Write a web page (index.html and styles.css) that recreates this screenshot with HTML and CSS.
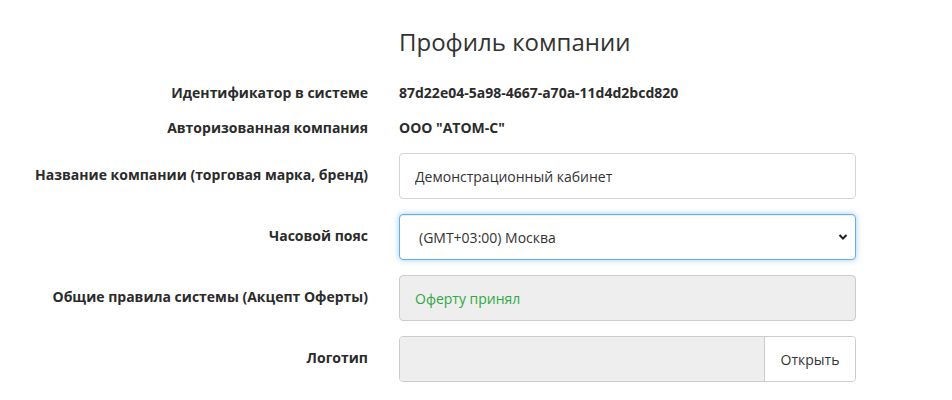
FILE: index.html
```html
<!DOCTYPE html>
<html lang="ru">
<head>
    <meta charset="UTF-8">
    <meta name="viewport" content="width=device-width, initial-scale=1.0">
    <title>Профиль компании</title>
    <link rel="stylesheet" href="styles.css">
</head>
<body>
    <div class="page">
        <div class="form-row title-row">
            <div></div>
            <h1>Профиль компании</h1>
        </div>

        <div class="info-row">
            <div class="label">Идентификатор в системе</div>
            <div class="value">87d22e04-5a98-4667-a70a-11d4d2bcd820</div>
        </div>
        <div class="info-row">
            <div class="label">Авторизованная компания</div>
            <div class="value">ООО "АТОМ-С"</div>
        </div>

        <form id="profileForm">
            <div class="form-row">
                <label for="brand">Название компании (торговая марка, бренд)</label>
                <input type="text" id="brand" class="field" value="Демонстрационный кабинет">
            </div>

            <div class="form-row">
                <label for="tz">Часовой пояс</label>
                <div class="select-wrap">
                    <select id="tz" class="field focused">
                        <option>(GMT+03:00) Москва</option>
                    </select>
                    <svg class="chevron" width="10" height="8" viewBox="0 0 10 8">
                        <path d="M1.5 2 L5 5.5 L8.5 2" fill="none" stroke="#222" stroke-width="2"/>
                    </svg>
                </div>
            </div>

            <div class="form-row">
                <label>Общие правила системы (Акцепт Оферты)</label>
                <div class="field readonly offer">Оферту принял</div>
            </div>

            <div class="form-row">
                <label for="logo">Логотип</label>
                <div class="file-group">
                    <div class="file-name"></div>
                    <button type="button" class="file-btn">Открыть</button>
                </div>
            </div>
        </form>
    </div>
</body>
</html>
```

FILE: styles.css
```css
body {
    margin: 0;
    font-family: "Open Sans", "DejaVu Sans", sans-serif;
    color: #333;
    background: #fff;
}
.page {
    padding: 27px 0 0 8px;
}
.form-row, .info-row {
    display: grid;
    grid-template-columns: 360px 457px;
    column-gap: 31px;
}
.title-row {
    margin-bottom: 19px;
}
h1 {
    margin: 0;
    font-size: 24px;
    font-weight: 400;
    line-height: 29px;
    color: #333;
}
.info-row {
    padding: 8px 0;
    line-height: 19px;
}
.info-row:last-of-type {
    margin-bottom: 8px;
}
.label, label {
    text-align: right;
    font-size: 14px;
    font-weight: 700;
    color: #2b2b2b;
}
.value {
    font-size: 14px;
    font-weight: 700;
    color: #2b2b2b;
}
.form-row label {
    align-self: center;
    padding-bottom: 4px;
}
#profileForm .form-row {
    margin-bottom: 15px;
}
.field {
    box-sizing: border-box;
    width: 100%;
    height: 46px;
    padding: 0 15px;
    border: 1px solid #d4d4d4;
    border-radius: 4px;
    font-family: inherit;
    font-size: 14px;
    color: #333;
    background: #fff;
}
.select-wrap {
    position: relative;
}
select.field {
    appearance: none;
    -webkit-appearance: none;
    padding-left: 19px;
}
.focused {
    border-color: #66afe9;
    outline: none;
    box-shadow: inset 0 1px 1px rgba(0, 0, 0, .075), 0 0 6px rgba(102, 175, 233, .6);
}
.chevron {
    position: absolute;
    right: 8px;
    top: 19px;
}
.readonly {
    display: flex;
    align-items: center;
    background: #eee;
    border-color: #ccc;
}
.offer {
    color: #2fa844;
}
.file-group {
    display: flex;
    height: 46px;
    box-sizing: border-box;
    border: 1px solid #ccc;
    border-radius: 4px;
    overflow: hidden;
}
.file-name {
    flex: 1;
    background: #eee;
}
.file-btn {
    width: 91px;
    border: none;
    border-left: 1px solid #ccc;
    background: #fff;
    font-family: inherit;
    font-size: 14px;
    color: #333;
    cursor: pointer;
}
```
